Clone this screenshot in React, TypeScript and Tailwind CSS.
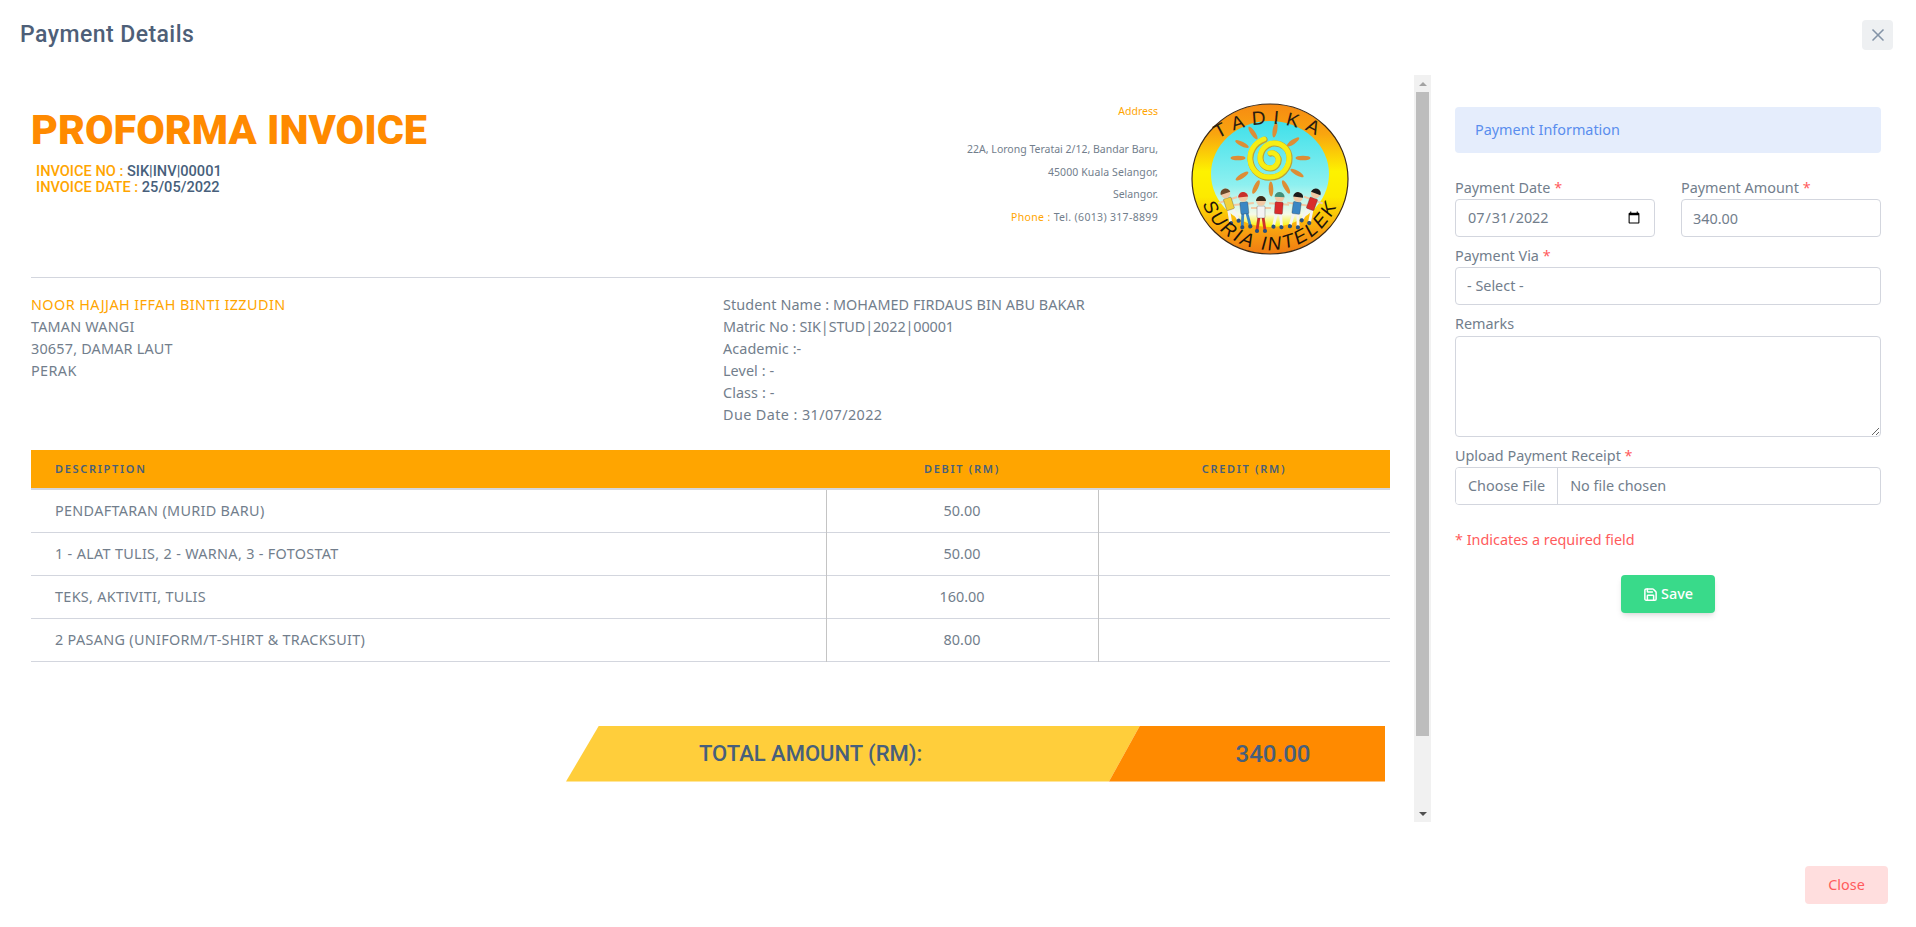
import { Save, X } from 'lucide-react';

const rows = [
  { description: 'PENDAFTARAN (MURID BARU)', debit: '50.00' },
  { description: '1 - ALAT TULIS, 2 - WARNA, 3 - FOTOSTAT', debit: '50.00' },
  { description: 'TEKS, AKTIVITI, TULIS', debit: '160.00' },
  { description: '2 PASANG (UNIFORM/T-SHIRT & TRACKSUIT)', debit: '80.00' },
];

const rays = [
  [62, 30], [84, 27], [102, 39], [112, 55], [106, 70],
  [95, 84], [80, 86], [65, 84], [51, 73], [47, 55], [51, 41],
];

const kids = [
  { x: 37, y: 98, tilt: -18, shirt: '#f2d13a', hair: '#6b4a2a', legs: '#f4f4f4' },
  { x: 53, y: 102, tilt: -6, shirt: '#3b87c4', hair: '#c8302a', legs: '#3b87c4' },
  { x: 70, y: 106, tilt: 0, shirt: '#f4f4f4', hair: '#3a2a1a', legs: '#d0302a' },
  { x: 88, y: 102, tilt: 4, shirt: '#d92b2b', hair: '#3f8f7a', legs: '#f4f4f4' },
  { x: 106, y: 102, tilt: 8, shirt: '#3b87c4', hair: '#1a1a1a', legs: '#f4f4f4' },
  { x: 122, y: 98, tilt: 20, shirt: '#d92b2b', hair: '#1a1a1a', legs: '#f4f4f4' },
];

const spiral =
  'M 73 36 C 62 40 58 50 59 57 C 60 68 70 75 79 74 C 90 74 98 65 98 55 C 98 45 90 40 83 40 C 75 40 69 47 69 55 C 69 61 74 65 79 65 C 84 65 88 60 87 55 C 86 51 82 49 79 50';

function Logo() {
  return (
    <svg width="158" height="152" viewBox="0 0 158 152">
      <defs>
        <linearGradient id="ring" x1="0" y1="0" x2="0" y2="1">
          <stop offset="0" stopColor="#f68a12" />
          <stop offset="0.2" stopColor="#f9a50f" />
          <stop offset="0.45" stopColor="#fdf200" />
          <stop offset="0.62" stopColor="#fdea00" />
          <stop offset="0.85" stopColor="#f8a010" />
          <stop offset="1" stopColor="#ee7a12" />
        </linearGradient>
        <linearGradient id="sky" x1="0" y1="0" x2="0" y2="1">
          <stop offset="0" stopColor="#3fe0ea" />
          <stop offset="0.6" stopColor="#8df0f0" />
          <stop offset="0.88" stopColor="#f6fbe8" />
          <stop offset="1" stopColor="#fdf200" />
        </linearGradient>
        <path id="topArc" d="M 4 76 A 75 55 0 0 1 154 76" />
        <path id="bottomArc" d="M 7 76 A 72 71 0 0 0 151 76" />
      </defs>
      <ellipse cx="79" cy="76" rx="78" ry="75" fill="url(#ring)" stroke="#3a2a1a" strokeWidth="1.2" />
      <ellipse cx="79" cy="71" rx="59" ry="53" fill="url(#sky)" />
      {rays.map(([x, y]) => (
        <ellipse
          key={`${x}-${y}`}
          cx={x}
          cy={y}
          rx="7.5"
          ry="2.3"
          fill="#dd8d35"
          transform={`rotate(${(Math.atan2(y - 55, x - 79) * 180) / Math.PI} ${x} ${y})`}
        />
      ))}
      <path d={spiral} fill="none" stroke="#b9a23a" strokeWidth="6" strokeLinecap="round" transform="translate(0.6 0.6)" />
      <path d={spiral} fill="none" stroke="#f6ee14" strokeWidth="5" strokeLinecap="round" />
      {kids.map((k) => (
        <g key={k.x} transform={`rotate(${k.tilt} ${k.x} ${k.y})`}>
          <line x1={k.x - 10} y1={k.y - 1} x2={k.x + 10} y2={k.y - 1} stroke="#f1c9a5" strokeWidth="2" />
          <line x1={k.x - 2} y1={k.y + 8} x2={k.x - 4} y2={k.y + 21} stroke={k.legs} strokeWidth="2.8" />
          <line x1={k.x + 2} y1={k.y + 8} x2={k.x + 4} y2={k.y + 21} stroke={k.legs} strokeWidth="2.8" />
          <circle cx={k.x - 4} cy={k.y + 22} r="2.1" fill="#27507f" />
          <circle cx={k.x + 4} cy={k.y + 22} r="2.1" fill="#27507f" />
          <rect x={k.x - 4} y={k.y - 3} width="8" height="12" rx="1" fill={k.shirt} stroke="#333" strokeWidth="0.3" />
          <circle cx={k.x} cy={k.y - 8} r="4.8" fill="#f1c9a5" />
          <path d={`M ${k.x - 5} ${k.y - 8} A 5 5 0 0 1 ${k.x + 5} ${k.y - 8} Z`} fill={k.hair} />
        </g>
      ))}
      <text fontFamily="'Liberation Sans', sans-serif" fontSize="19" fill="#2a1c10" letterSpacing="7">
        <textPath href="#topArc" startOffset="50%" textAnchor="middle">TADIKA</textPath>
      </text>
      <text fontFamily="'Liberation Sans', sans-serif" fontSize="19" fontStyle="italic" fill="#1d130a" letterSpacing="2.4">
        <textPath href="#bottomArc" startOffset="50%" textAnchor="middle">SURIA INTELEK</textPath>
      </text>
    </svg>
  );
}

function Required({ label }: { label: string }) {
  return (
    <label className="block h-[22px] leading-[22px] text-[#727e8c]">
      {label} <span className="text-[#ff5b5c]">*</span>
    </label>
  );
}

const inputClass =
  'h-[38px] w-full rounded-[4px] border border-[#d3d6de] bg-white px-[11px] text-[#727e8c] outline-none';

export default function App() {
  return (
    <div className="flex min-h-screen flex-col bg-white text-[14.4px] text-[#727e8c] [font-family:'Noto_Sans',sans-serif]">
      <div className="flex h-[75px] items-start justify-between pl-5 pr-[23px] pt-[21px]">
        <h1 className="text-[23px] font-medium leading-[28px] tracking-[0.45px] text-[#4e5f78] [font-family:Roboto,sans-serif]">Payment Details</h1>
        <button className="-mt-px flex h-[30px] w-[31px] items-center justify-center rounded-[4px] bg-[#eef0f2] text-[#8494a7]">
          <X size={20} />
        </button>
      </div>

      <div className="flex h-[747px]">
        <div className="w-[1414px] pl-[31px] pr-[24px]">
          <div className="flex h-[203px] justify-between border-b border-[#d3d6de]">
            <div className="pt-[31px] [font-family:Roboto,sans-serif]">
              <div className="text-[41.4px] font-black leading-[48px] text-[#ff8a00]">PROFORMA INVOICE</div>
              <div className="mt-[9px] pl-[5px] text-[14.6px] font-medium leading-[16px] text-[#475f7b]">
                <div><span className="text-[#ffa500]">INVOICE NO :</span> SIK|INV|00001</div>
                <div><span className="text-[#ffa500]">INVOICE DATE :</span> 25/05/2022</div>
              </div>
            </div>
            <div className="flex pr-[41px]">
              <div className="pt-[25px] text-right text-[10.5px] leading-[22.4px]">
                <div className="mb-4 text-[#ffa500]">Address</div>
                <div>22A, Lorong Teratai 2/12, Bandar Baru,</div>
                <div className="tracking-[0.1px]">45000 Kuala Selangor,</div>
                <div>Selangor.</div>
                <div className="tracking-[0.33px]"><span className="text-[#ffa500]">Phone :</span> Tel. (6013) 317-8899</div>
              </div>
              <div className="ml-[33px] pt-[28px]">
                <Logo />
              </div>
            </div>
          </div>

          <div className="flex pt-4 leading-[22px]">
            <div className="w-[692px]">
              <div className="tracking-[0.43px] text-[#ffa500]">NOOR HAJJAH IFFAH BINTI IZZUDIN</div>
              <div className="tracking-[0.2px]">TAMAN WANGI</div>
              <div className="tracking-[0.2px]">30657, DAMAR LAUT</div>
              <div className="tracking-[0.4px]">PERAK</div>
            </div>
            <div className="tracking-[0.08px]">
              <div>Student Name : MOHAMED FIRDAUS BIN ABU BAKAR</div>
              <div className="tracking-[-0.1px]">Matric No : SIK|STUD|2022|00001</div>
              <div>Academic :-</div>
              <div>Level : -</div>
              <div>Class : -</div>
              <div className="tracking-[0.4px]">Due Date : 31/07/2022</div>
            </div>
          </div>

          <table className="mt-[24px] w-full table-fixed border-collapse">
            <thead>
              <tr className="h-[39px] border-b-2 border-[#d3d6de] bg-[#ffa500] text-[11px] tracking-[1.7px] text-[#475f7b]">
                <th className="w-[795px] pl-6 text-left font-semibold">DESCRIPTION</th>
                <th className="w-[272px] font-semibold">DEBIT (RM)</th>
                <th className="font-semibold">CREDIT (RM)</th>
              </tr>
            </thead>
            <tbody>
              {rows.map((row) => (
                <tr key={row.description} className="h-[43px] border-b border-[#d3d6de]">
                  <td className="pl-6 tracking-[0.32px]">{row.description}</td>
                  <td className="border-x border-[#c4c4c4] text-center">{row.debit}</td>
                  <td></td>
                </tr>
              ))}
            </tbody>
          </table>

          <div className="ml-[535px] mt-[64px] flex h-[56px] text-[22px] font-medium text-[#475f7b] [font-family:Roboto,sans-serif]">
            <div className="flex w-[574px] items-center bg-[#ffce3b] pl-[133px] [clip-path:polygon(33px_0,100%_0,543px_100%,0_100%)]">
              TOTAL AMOUNT (RM):
            </div>
            <div className="-ml-[31px] flex w-[276px] items-center justify-center bg-[#ff8a00] pl-[52px] text-[24px] [clip-path:polygon(31px_0,100%_0,100%_100%,0_100%)]">
              340.00
            </div>
          </div>
        </div>

        <div className="flex w-[17px] flex-col items-center bg-[#f1f1f1]">
          <div className="flex h-[17px] items-center justify-center">
            <div className="h-0 w-0 border-x-[4px] border-b-[4px] border-x-transparent border-b-[#a3a3a3]"></div>
          </div>
          <div className="h-[644px] w-[13px] bg-[#bdbdbd]"></div>
          <div className="mt-auto flex h-[17px] items-center justify-center">
            <div className="h-0 w-0 border-x-[4px] border-t-[4px] border-x-transparent border-t-[#505050]"></div>
          </div>
        </div>

        <div className="flex-1 pl-6 pr-[35px] pt-8">
          <div className="flex h-[46px] items-center rounded-[4px] bg-[#e5edfc] px-5 text-[#5a8dee]">Payment Information</div>

          <div className="mt-6 flex flex-col gap-2">
            <div className="grid grid-cols-2 gap-[26px]">
              <div>
                <Required label="Payment Date" />
                <input type="date" defaultValue="2022-07-31" className={inputClass} />
              </div>
              <div>
                <Required label="Payment Amount" />
                <input type="text" defaultValue="340.00" className={inputClass} />
              </div>
            </div>
            <div>
              <Required label="Payment Via" />
              <div className={`${inputClass} flex items-center`}>- Select -</div>
            </div>
            <div>
              <label className="block h-[23px] leading-[22px]">Remarks</label>
              <textarea className="block h-[101px] w-full rounded-[4px] border border-[#d3d6de] px-3 py-2 outline-none"></textarea>
            </div>
            <div>
              <Required label="Upload Payment Receipt" />
              <input
                type="file"
                className="block h-[38px] w-full rounded-[4px] border border-[#d3d6de] pr-3 leading-[36px] text-[#727e8c] file:mr-3 file:h-[36px] file:border-0 file:border-r file:border-solid file:border-[#d3d6de] file:bg-white file:px-3 file:text-[#727e8c]"
              />
            </div>
          </div>

          <p className="mt-6 leading-[22px] text-[#ff5b5c]">* Indicates a required field</p>

          <div className="mt-6 flex justify-center">
            <button className="flex h-[38px] w-[94px] items-center justify-center gap-[3px] rounded-[4px] bg-[#39da8a] font-medium text-white shadow-md">
              <Save size={15} strokeWidth={2.4} />
              Save
            </button>
          </div>
        </div>
      </div>

      <div className="flex justify-end pr-[28px] pt-[44px]">
        <button className="h-[38px] w-[83px] rounded-[4px] bg-[#ffdede] text-[#ff5b5c]">Close</button>
      </div>
    </div>
  );
}
